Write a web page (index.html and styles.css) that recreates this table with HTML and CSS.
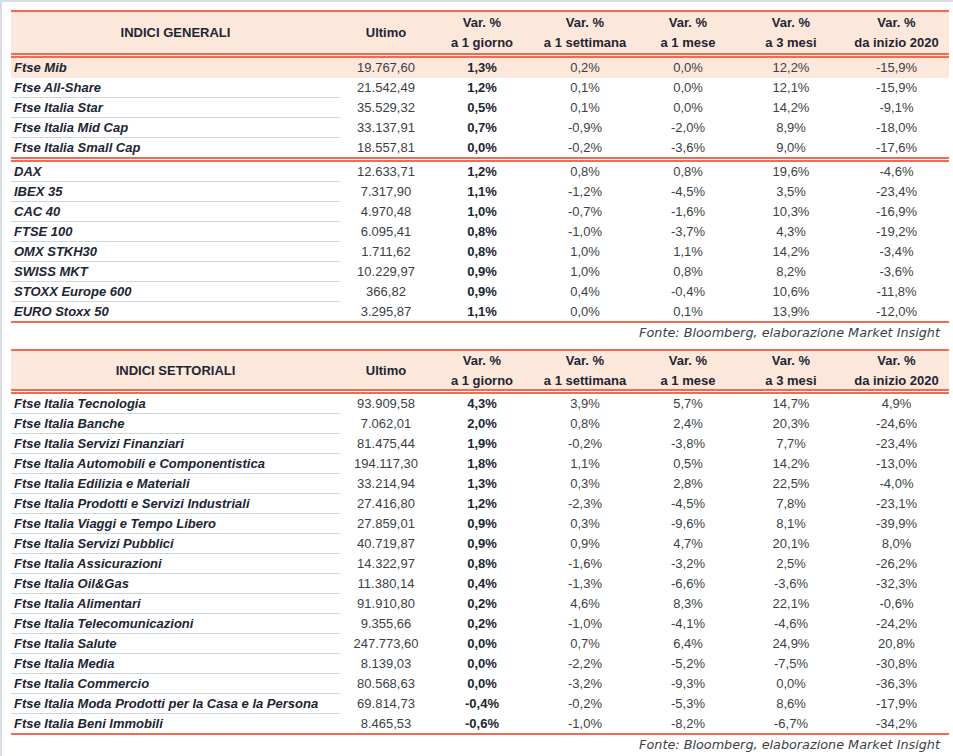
FILE: index.html
```html
<!DOCTYPE html>
<html lang="it">
<head>
<meta charset="utf-8">
<title>Indici</title>
<link rel="stylesheet" href="styles.css">
</head>
<body>
<div class="frame">
<div class="sheet">
  <div class="grid head">
    <div class="th">INDICI GENERALI</div>
    <div class="th">Ultimo</div>
    <div class="th">Var. %<br>a 1 giorno</div>
    <div class="th">Var. %<br>a 1 settimana</div>
    <div class="th">Var. %<br>a 1 mese</div>
    <div class="th">Var. %<br>a 3 mesi</div>
    <div class="th">Var. %<br>da inizio 2020</div>
  </div>
  <div class="dbl peach"></div>
  <div class="grid row hl"><div class="n">Ftse Mib</div><div class="c">19.767,60</div><div class="c b">1,3%</div><div class="c">0,2%</div><div class="c">0,0%</div><div class="c">12,2%</div><div class="c">-15,9%</div></div>
  <div class="grid row"><div class="n">Ftse All-Share</div><div class="c">21.542,49</div><div class="c b">1,2%</div><div class="c">0,1%</div><div class="c">0,0%</div><div class="c">12,1%</div><div class="c">-15,9%</div></div>
  <div class="grid row"><div class="n">Ftse Italia Star</div><div class="c">35.529,32</div><div class="c b">0,5%</div><div class="c">0,1%</div><div class="c">0,0%</div><div class="c">14,2%</div><div class="c">-9,1%</div></div>
  <div class="grid row"><div class="n">Ftse Italia Mid Cap</div><div class="c">33.137,91</div><div class="c b">0,7%</div><div class="c">-0,9%</div><div class="c">-2,0%</div><div class="c">8,9%</div><div class="c">-18,0%</div></div>
  <div class="grid row last"><div class="n">Ftse Italia Small Cap</div><div class="c">18.557,81</div><div class="c b">0,0%</div><div class="c">-0,2%</div><div class="c">-3,6%</div><div class="c">9,0%</div><div class="c">-17,6%</div></div>
  <div class="dbl"></div>
  <div class="grid row"><div class="n">DAX</div><div class="c">12.633,71</div><div class="c b">1,2%</div><div class="c">0,8%</div><div class="c">0,8%</div><div class="c">19,6%</div><div class="c">-4,6%</div></div>
  <div class="grid row"><div class="n">IBEX 35</div><div class="c">7.317,90</div><div class="c b">1,1%</div><div class="c">-1,2%</div><div class="c">-4,5%</div><div class="c">3,5%</div><div class="c">-23,4%</div></div>
  <div class="grid row"><div class="n">CAC 40</div><div class="c">4.970,48</div><div class="c b">1,0%</div><div class="c">-0,7%</div><div class="c">-1,6%</div><div class="c">10,3%</div><div class="c">-16,9%</div></div>
  <div class="grid row"><div class="n">FTSE 100</div><div class="c">6.095,41</div><div class="c b">0,8%</div><div class="c">-1,0%</div><div class="c">-3,7%</div><div class="c">4,3%</div><div class="c">-19,2%</div></div>
  <div class="grid row"><div class="n">OMX STKH30</div><div class="c">1.711,62</div><div class="c b">0,8%</div><div class="c">1,0%</div><div class="c">1,1%</div><div class="c">14,2%</div><div class="c">-3,4%</div></div>
  <div class="grid row"><div class="n">SWISS MKT</div><div class="c">10.229,97</div><div class="c b">0,9%</div><div class="c">1,0%</div><div class="c">0,8%</div><div class="c">8,2%</div><div class="c">-3,6%</div></div>
  <div class="grid row"><div class="n">STOXX Europe 600</div><div class="c">366,82</div><div class="c b">0,9%</div><div class="c">0,4%</div><div class="c">-0,4%</div><div class="c">10,6%</div><div class="c">-11,8%</div></div>
  <div class="grid row last"><div class="n">EURO Stoxx 50</div><div class="c">3.295,87</div><div class="c b">1,1%</div><div class="c">0,0%</div><div class="c">0,1%</div><div class="c">13,9%</div><div class="c">-12,0%</div></div>
  <div class="endline"></div>
  <p class="src">Fonte: Bloomberg, elaborazione Market Insight</p>

  <div class="grid head short">
    <div class="th">INDICI SETTORIALI</div>
    <div class="th">Ultimo</div>
    <div class="th">Var. %<br>a 1 giorno</div>
    <div class="th">Var. %<br>a 1 settimana</div>
    <div class="th">Var. %<br>a 1 mese</div>
    <div class="th">Var. %<br>a 3 mesi</div>
    <div class="th">Var. %<br>da inizio 2020</div>
  </div>
  <div class="dbl"></div>
  <div class="grid row"><div class="n">Ftse Italia Tecnologia</div><div class="c">93.909,58</div><div class="c b">4,3%</div><div class="c">3,9%</div><div class="c">5,7%</div><div class="c">14,7%</div><div class="c">4,9%</div></div>
  <div class="grid row"><div class="n">Ftse Italia Banche</div><div class="c">7.062,01</div><div class="c b">2,0%</div><div class="c">0,8%</div><div class="c">2,4%</div><div class="c">20,3%</div><div class="c">-24,6%</div></div>
  <div class="grid row"><div class="n">Ftse Italia Servizi Finanziari</div><div class="c">81.475,44</div><div class="c b">1,9%</div><div class="c">-0,2%</div><div class="c">-3,8%</div><div class="c">7,7%</div><div class="c">-23,4%</div></div>
  <div class="grid row"><div class="n">Ftse Italia Automobili e Componentistica</div><div class="c">194.117,30</div><div class="c b">1,8%</div><div class="c">1,1%</div><div class="c">0,5%</div><div class="c">14,2%</div><div class="c">-13,0%</div></div>
  <div class="grid row"><div class="n">Ftse Italia Edilizia e Materiali</div><div class="c">33.214,94</div><div class="c b">1,3%</div><div class="c">0,3%</div><div class="c">2,8%</div><div class="c">22,5%</div><div class="c">-4,0%</div></div>
  <div class="grid row"><div class="n">Ftse Italia Prodotti e Servizi Industriali</div><div class="c">27.416,80</div><div class="c b">1,2%</div><div class="c">-2,3%</div><div class="c">-4,5%</div><div class="c">7,8%</div><div class="c">-23,1%</div></div>
  <div class="grid row"><div class="n">Ftse Italia Viaggi e Tempo Libero</div><div class="c">27.859,01</div><div class="c b">0,9%</div><div class="c">0,3%</div><div class="c">-9,6%</div><div class="c">8,1%</div><div class="c">-39,9%</div></div>
  <div class="grid row"><div class="n">Ftse Italia Servizi Pubblici</div><div class="c">40.719,87</div><div class="c b">0,9%</div><div class="c">0,9%</div><div class="c">4,7%</div><div class="c">20,1%</div><div class="c">8,0%</div></div>
  <div class="grid row"><div class="n">Ftse Italia Assicurazioni</div><div class="c">14.322,97</div><div class="c b">0,8%</div><div class="c">-1,6%</div><div class="c">-3,2%</div><div class="c">2,5%</div><div class="c">-26,2%</div></div>
  <div class="grid row"><div class="n">Ftse Italia Oil&amp;Gas</div><div class="c">11.380,14</div><div class="c b">0,4%</div><div class="c">-1,3%</div><div class="c">-6,6%</div><div class="c">-3,6%</div><div class="c">-32,3%</div></div>
  <div class="grid row"><div class="n">Ftse Italia Alimentari</div><div class="c">91.910,80</div><div class="c b">0,2%</div><div class="c">4,6%</div><div class="c">8,3%</div><div class="c">22,1%</div><div class="c">-0,6%</div></div>
  <div class="grid row"><div class="n">Ftse Italia Telecomunicazioni</div><div class="c">9.355,66</div><div class="c b">0,2%</div><div class="c">-1,0%</div><div class="c">-4,1%</div><div class="c">-4,6%</div><div class="c">-24,2%</div></div>
  <div class="grid row"><div class="n">Ftse Italia Salute</div><div class="c">247.773,60</div><div class="c b">0,0%</div><div class="c">0,7%</div><div class="c">6,4%</div><div class="c">24,9%</div><div class="c">20,8%</div></div>
  <div class="grid row"><div class="n">Ftse Italia Media</div><div class="c">8.139,03</div><div class="c b">0,0%</div><div class="c">-2,2%</div><div class="c">-5,2%</div><div class="c">-7,5%</div><div class="c">-30,8%</div></div>
  <div class="grid row"><div class="n">Ftse Italia Commercio</div><div class="c">80.568,63</div><div class="c b">0,0%</div><div class="c">-3,2%</div><div class="c">-9,3%</div><div class="c">0,0%</div><div class="c">-36,3%</div></div>
  <div class="grid row"><div class="n">Ftse Italia Moda Prodotti per la Casa e la Persona</div><div class="c">69.814,73</div><div class="c b">-0,4%</div><div class="c">-0,2%</div><div class="c">-5,3%</div><div class="c">8,6%</div><div class="c">-17,9%</div></div>
  <div class="grid row last"><div class="n">Ftse Italia Beni Immobili</div><div class="c">8.465,53</div><div class="c b">-0,6%</div><div class="c">-1,0%</div><div class="c">-8,2%</div><div class="c">-6,7%</div><div class="c">-34,2%</div></div>
  <div class="endline"></div>
  <p class="src">Fonte: Bloomberg, elaborazione Market Insight</p>
</div>
</div>
</body>
</html>
```

FILE: styles.css
```css
html, body {
  margin: 0;
  padding: 0;
  background: #ffffff;
  overflow: hidden;
}

.frame {
  border-top: 2px solid #d4dce8;
  border-left: 2px solid #d4dce8;
  padding: 8px 0 0 9px;
  min-height: 760px;
  box-sizing: border-box;
}

.sheet {
  width: 938px;
  font-family: "Liberation Sans", Arial, sans-serif;
  font-size: 13px;
  color: #3a3f46;
}

.grid {
  display: grid;
  grid-template-columns: 329px 92px 100px 106px 100px 106px 105px;
}

.head {
  border-top: 2px solid #f26a4f;
  background: #fce8da;
  height: 41px;
  align-items: center;
  font-weight: bold;
  line-height: 20px;
  color: #1c2533;
  text-align: center;
}

.head.short {
  height: 38px;
}

.dbl {
  height: 1px;
  border-top: 2px solid #f26a4f;
  border-bottom: 2px solid #f26a4f;
  background: #ffffff;
}

.dbl.peach {
  background: #fdf0e6;
}

.row {
  height: 20px;
  line-height: 19px;
}

.row .n {
  border-bottom: 1px solid #cfd6e1;
  padding-left: 3px;
  font-weight: bold;
  font-style: italic;
  color: #1c2533;
  white-space: nowrap;
}

.row .c {
  text-align: center;
  white-space: nowrap;
}

.row .b {
  font-weight: bold;
  color: #1c2533;
}

.row.last {
  height: 19px;
}

.row.last .n {
  border-bottom: 0;
}

.row.hl {
  background: #fce8da;
}

.row.hl .n {
  border-bottom-color: transparent;
}

.endline {
  height: 2px;
  background: #f26a4f;
}

.src {
  margin: 0 0 7px;
  height: 19px;
  line-height: 19px;
  padding-right: 9px;
  text-align: right;
  font-family: "DejaVu Sans", sans-serif;
  font-style: italic;
  font-size: 12.8px;
  color: #3a3f46;
}
```
